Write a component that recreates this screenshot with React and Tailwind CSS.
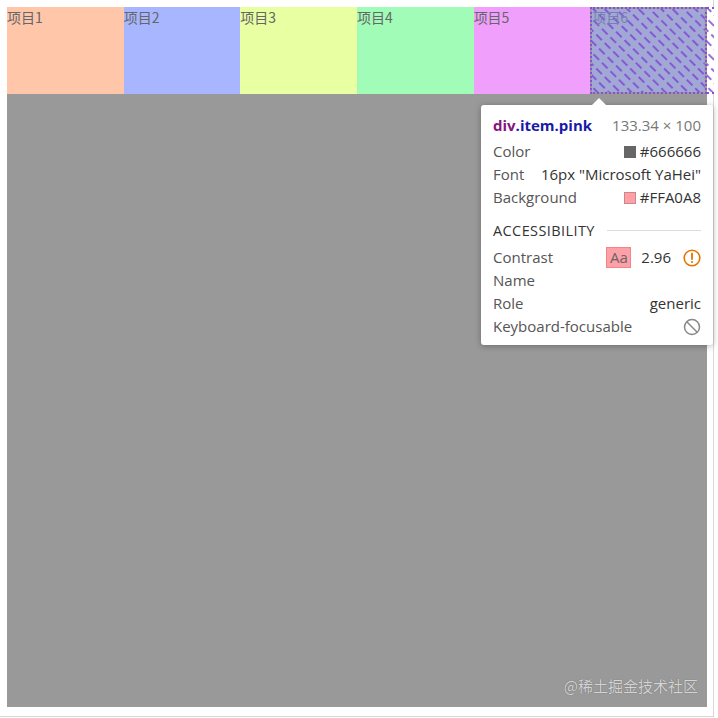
import React from 'react';

const items = [
  { label: '项目1', bg: 'bg-[#ffc6aa]' },
  { label: '项目2', bg: 'bg-[#a8b6ff]' },
  { label: '项目3', bg: 'bg-[#e8ffa2]' },
  { label: '项目4', bg: 'bg-[#a0fcb6]' },
  { label: '项目5', bg: 'bg-[#f0a0fc]' },
];

function Hatch({ id, bg }) {
  return (
    <svg className="absolute inset-0 h-full w-full" preserveAspectRatio="none">
      <defs>
        <pattern id={id} width="8" height="12" patternUnits="userSpaceOnUse" patternTransform="rotate(-45)">
          <rect width="8" height="12" fill={bg} />
          <line x1="1" y1="0" x2="1" y2="12" stroke="#7a3ed6" strokeWidth="1.5" strokeDasharray="5 4" />
        </pattern>
      </defs>
      <rect width="100%" height="100%" fill={`url(#${id})`} />
    </svg>
  );
}

function Row({ label, children }) {
  return (
    <div className="flex h-[23px] items-center justify-between">
      <span className="text-[#555]">{label}</span>
      <span className="flex items-center gap-1 text-[#333]">{children}</span>
    </div>
  );
}

function Tooltip() {
  return (
    <div className="absolute left-[481px] top-[105px] w-[232px] rounded-[3px] bg-white px-3 pt-[9px] pb-[7px] text-[15px] shadow-[0_1px_6px_rgba(0,0,0,0.3)] font-['Open_Sans','Noto_Sans',sans-serif]">
      <div className="absolute -top-[7px] left-[110px] h-0 w-0 border-x-[8px] border-b-[8px] border-x-transparent border-b-white" />
      <div className="flex h-[23px] items-center justify-between">
        <span className="font-bold">
          <span className="text-[#881280]">div</span>
          <span className="text-[#1a1aa6]">.item.pink</span>
        </span>
        <span className="text-[#777]">133.34 × 100</span>
      </div>
      <div className="mt-[3px]">
        <Row label="Color">
          <span className="h-[12px] w-[12px] bg-[#666]" />#666666
        </Row>
        <Row label="Font">16px "Microsoft YaHei"</Row>
        <Row label="Background">
          <span className="h-[12px] w-[12px] border border-[#c88] bg-[#ffa0a8]" />#FFA0A8
        </Row>
      </div>
      <div className="mt-[10px] flex h-[23px] items-center gap-3">
        <span className="text-[14.5px] font-medium tracking-[0.4px] text-[#333]">ACCESSIBILITY</span>
        <span className="h-px flex-1 bg-[#ddd]" />
      </div>
      <div className="mt-[4px]">
        <Row label="Contrast">
          <span className="mr-[6px] flex h-[21px] w-[25px] items-center justify-center border border-[#e88] bg-[#ffa0a8] text-[#666]">Aa</span>
          <span>2.96</span>
          <svg className="ml-[8px]" width="18" height="18" viewBox="0 0 18 18">
            <circle cx="9" cy="9" r="7.8" fill="none" stroke="#e37400" strokeWidth="1.6" />
            <line x1="9" y1="4.5" x2="9" y2="10" stroke="#e37400" strokeWidth="1.8" strokeLinecap="round" />
            <circle cx="9" cy="13" r="1.1" fill="#e37400" />
          </svg>
        </Row>
        <Row label="Name" />
        <Row label="Role">generic</Row>
        <Row label="Keyboard-focusable">
          <svg width="18" height="18" viewBox="0 0 18 18">
            <circle cx="9" cy="9" r="7.5" fill="none" stroke="#888" strokeWidth="1.5" />
            <line x1="3.8" y1="3.8" x2="14.2" y2="14.2" stroke="#888" strokeWidth="1.5" />
          </svg>
        </Row>
      </div>
    </div>
  );
}

export default function App() {
  return (
    <div className="relative h-[718px] w-[718px] overflow-hidden bg-white font-['Noto_Sans_CJK_SC',sans-serif]">
      <div className="h-[717px] w-[714px] border-r border-b border-[#d6d6d6] pl-[7px] pt-[7px]">
        <div className="relative h-[700px] w-[700px] bg-[#999]">
          <div className="flex h-[87px]">
            {items.map((it) => (
              <div key={it.label} className={`w-1/6 ${it.bg} text-[14px] leading-[20px] text-[#666]`}>
                {it.label}
              </div>
            ))}
            <div className="relative w-1/6 border-2 border-dotted border-[#8a4fd8] text-[14px] leading-[16px] text-[#7880b0]">
              <Hatch id="hatch-item" bg="#a2a8d6" />
              <span className="relative">项目6</span>
            </div>
            <div className="relative -mr-[8px] w-[7px] shrink-0 border-y-2 border-dotted border-[#8a4fd8]">
              <Hatch id="hatch-over" bg="#ffffff" />
            </div>
          </div>
          <div className="absolute bottom-[10px] right-[9px] text-[15px] text-[#d4d4d4] [text-shadow:0_0_1px_rgba(0,0,0,0.4)]">
            @稀土掘金技术社区
          </div>
        </div>
      </div>
      <Tooltip />
    </div>
  );
}
